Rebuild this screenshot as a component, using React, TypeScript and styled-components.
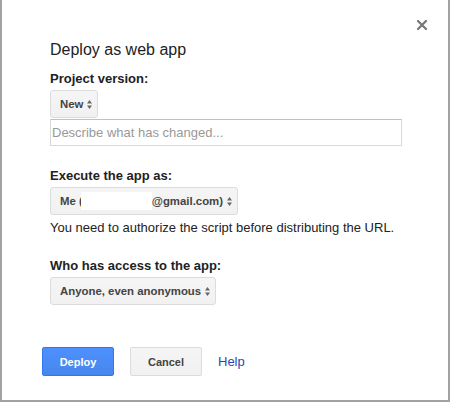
import styled, { createGlobalStyle } from "styled-components";

const GlobalStyle = createGlobalStyle`
  html, body {
    margin: 0;
    padding: 0;
    background: #fff;
  }

  body {
    font-family: "Liberation Sans", Arial, sans-serif;
    color: #222;
  }
`;

const Dialog = styled.div`
  position: relative;
  width: 450px;
  height: 402px;
  box-sizing: border-box;
  border: 2px solid #a2a2a2;
  border-top: none;
  padding: 40px 0 0 48px;
  display: flex;
  flex-direction: column;
  align-items: flex-start;
`;

const CloseButton = styled.button`
  position: absolute;
  top: 18px;
  right: 21px;
  width: 10px;
  height: 10px;
  padding: 0;
  border: none;
  background: none;
  cursor: pointer;
  display: block;
`;

const Title = styled.h2`
  margin: 0;
  font-size: 16px;
  line-height: 20px;
  font-weight: normal;
  color: #222;
`;

const Label = styled.div<{ $gap: number }>`
  margin-top: ${(p) => p.$gap}px;
  margin-bottom: 3px;
  font-size: 13px;
  line-height: 16px;
  font-weight: bold;
  color: #222;
`;

const Select = styled.div`
  display: inline-flex;
  align-items: center;
  height: 28px;
  box-sizing: border-box;
  padding: 0 5px 0 9px;
  border: 1px solid #dcdcdc;
  border-radius: 3px;
  background: linear-gradient(#f5f5f5, #f1f1f1);
  font-size: 11.4px;
  font-weight: bold;
  color: #444;
  white-space: nowrap;
  cursor: default;
`;

const Redacted = styled.span`
  display: inline-block;
  width: 71px;
  height: 18px;
  margin-left: -2px;
  background: #fff;
`;

const Arrows = styled.svg`
  margin-left: 4px;
  flex-shrink: 0;
`;

const TextInput = styled.input`
  margin-top: 1px;
  width: 352px;
  height: 27px;
  box-sizing: border-box;
  padding: 0 0 0 1px;
  border: 1px solid #d9d9d9;
  border-top-color: #c0c0c0;
  font-family: inherit;
  font-size: 13px;
  color: #222;
  outline: none;

  &::placeholder {
    color: #999;
  }
`;

const Hint = styled.p`
  margin: 5px 0 0;
  font-size: 13px;
  line-height: 16px;
  color: #222;
`;

const ButtonRow = styled.div`
  margin-top: 42px;
  margin-left: -8px;
  display: flex;
  align-items: center;
  gap: 16px;
`;

const Button = styled.button<{ $primary?: boolean }>`
  width: 72px;
  height: 29px;
  box-sizing: border-box;
  padding: 0;
  border-radius: 2px;
  border: 1px solid ${(p) => (p.$primary ? "#3079ed" : "#dcdcdc")};
  background: ${(p) =>
    p.$primary
      ? "linear-gradient(#4d90fe, #4787ed)"
      : "linear-gradient(#f5f5f5, #f1f1f1)"};
  color: ${(p) => (p.$primary ? "#fff" : "#444")};
  font-family: inherit;
  font-size: 11px;
  font-weight: bold;
  cursor: pointer;
`;

const HelpLink = styled.a`
  font-size: 13px;
  color: #2b45b8;
  text-decoration: none;
`;

function SelectArrows() {
  return (
    <Arrows width="5" height="9" viewBox="0 0 5 9" aria-hidden>
      <path d="M2.5 0 L5 3.5 L0 3.5 Z" fill="#666" />
      <path d="M0 5.5 L5 5.5 L2.5 9 Z" fill="#666" />
    </Arrows>
  );
}

function App() {
  return (
    <>
      <GlobalStyle />
      <Dialog>
        <CloseButton aria-label="Close">
          <svg width="10" height="10" viewBox="0 0 10 10">
            <path
              d="M1 1 L9 9 M9 1 L1 9"
              stroke="#777"
              strokeWidth="2.2"
              strokeLinecap="square"
            />
          </svg>
        </CloseButton>

        <Title>Deploy as web app</Title>

        <Label $gap={11}>Project version:</Label>
        <Select>
          New
          <SelectArrows />
        </Select>
        <TextInput placeholder="Describe what has changed..." />

        <Label $gap={22}>Execute the app as:</Label>
        <Select>
          Me (<Redacted />
          @gmail.com)
          <SelectArrows />
        </Select>
        <Hint>You need to authorize the script before distributing the URL.</Hint>

        <Label $gap={22}>Who has access to the app:</Label>
        <Select>
          Anyone, even anonymous
          <SelectArrows />
        </Select>

        <ButtonRow>
          <Button $primary>Deploy</Button>
          <Button>Cancel</Button>
          <HelpLink href="#">Help</HelpLink>
        </ButtonRow>
      </Dialog>
    </>
  );
}

export default App;
